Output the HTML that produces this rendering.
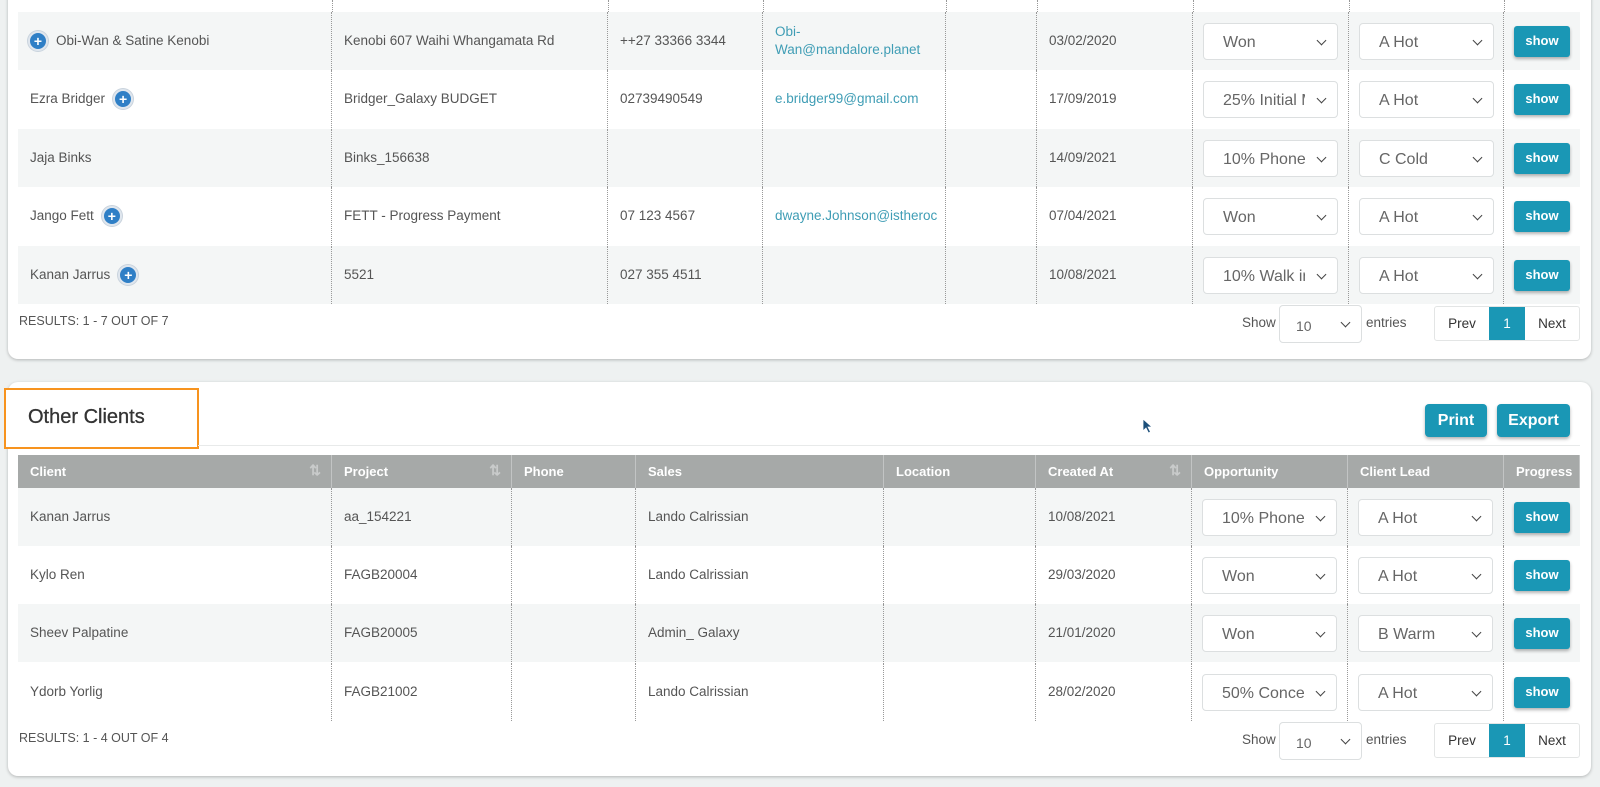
<!DOCTYPE html>
<html><head><meta charset="utf-8"><style>
*{box-sizing:border-box;margin:0;padding:0}
body{width:1600px;height:787px;background:#eef1f1;font-family:"Liberation Sans",sans-serif;color:#555;font-size:13.5px;position:relative;overflow:hidden}
.card{position:absolute;left:8px;width:1583px;background:#fff;border-radius:0 0 10px 10px;box-shadow:0 1px 3px rgba(0,0,0,.25)}
.row{position:absolute;left:18px;width:1562px;height:58px;display:flex}
.row.odd{background:#f4f6f6}
.c{height:100%;display:flex;align-items:center;padding-left:12px;border-right:1px dotted #999;position:relative;line-height:18px}
.c:last-child{border-right:none}
.sel{width:135px;height:37px;border:1px solid #dcdfe0;border-radius:4px;background:#fff;font-size:16px;color:#666;display:flex;align-items:center;padding-left:19px;padding-top:3px;position:relative;overflow:hidden;white-space:nowrap}
.sel span{display:block;width:82px;overflow:hidden}
.sel:after{content:"";position:absolute;right:12px;top:13px;width:6px;height:6px;border-right:1.7px solid #444;border-bottom:1.7px solid #444;transform:rotate(45deg)}
.show{width:56px;height:31px;background:#1a97b5;color:#fff;font-weight:bold;font-size:13px;border-radius:3px;display:flex;align-items:center;justify-content:center;box-shadow:0 2px 3px rgba(0,0,0,.3);margin-left:-1px}
.plus{width:20px;height:20px;border-radius:50%;background:#2f7fc6;border:2px solid #dfe6ee;box-shadow:0 0 0 1px #c9d3dd;color:#fff;font-size:14px;font-weight:bold;display:inline-flex;align-items:center;justify-content:center;line-height:1}
a{color:#3f9db5;text-decoration:none}
.hdr{position:absolute;left:18px;width:1562px;height:33px;background:#a6a9a8;display:flex}
.hdr .c{color:#fff;font-weight:bold;font-size:13px;border-right:1px solid #c2c4c4}
.sort{position:absolute;right:10px;top:6px;color:#c9cbcb;font-size:14px;font-weight:bold}
.res{position:absolute;left:19px;font-size:12.5px;color:#555}
.pg{position:absolute;display:flex;height:35px;border:1px solid #e3e5e5;border-radius:3px;font-size:13.5px;color:#333}
.pg div{display:flex;align-items:center;justify-content:center}
.btn{position:absolute;height:33px;background:#1a97b5;color:#fff;font-weight:bold;font-size:16px;border-radius:4px;display:flex;align-items:center;justify-content:center;box-shadow:0 2px 3px rgba(0,0,0,.3)}
</style></head><body>

<div class="card" style="top:-10px;height:369px;"></div>
<div style="position:absolute;left:332px;top:0;height:12px;border-left:1px dotted #999"></div>
<div style="position:absolute;left:608px;top:0;height:12px;border-left:1px dotted #999"></div>
<div style="position:absolute;left:763px;top:0;height:12px;border-left:1px dotted #999"></div>
<div style="position:absolute;left:946px;top:0;height:12px;border-left:1px dotted #999"></div>
<div style="position:absolute;left:1037px;top:0;height:12px;border-left:1px dotted #999"></div>
<div style="position:absolute;left:1193px;top:0;height:12px;border-left:1px dotted #999"></div>
<div style="position:absolute;left:1349px;top:0;height:12px;border-left:1px dotted #999"></div>
<div style="position:absolute;left:1504px;top:0;height:12px;border-left:1px dotted #999"></div>

<div class="row odd" style="top:12px">
<div class="c" style="width:314px;padding-left:10px"><span class="plus">+</span><span style="margin-left:8px">Obi-Wan &amp; Satine Kenobi</span></div>
<div class="c" style="width:276px">Kenobi 607 Waihi Whangamata Rd</div>
<div class="c" style="width:155px">++27 33366 3344</div>
<div class="c" style="width:183px"><a>Obi-<br>Wan@mandalore.planet</a></div>
<div class="c" style="width:91px"></div>
<div class="c" style="width:156px">03/02/2020</div>
<div class="c" style="width:156px;padding-left:10px"><div class="sel"><span>Won</span></div></div>
<div class="c" style="width:155px;padding-left:10px"><div class="sel"><span>A Hot</span></div></div>
<div class="c" style="width:76px;padding-left:11px"><div class="show">show</div></div>
</div>
<div class="row" style="top:70px">
<div class="c" style="width:314px">Ezra Bridger<span class="plus" style="margin-left:8px">+</span></div>
<div class="c" style="width:276px">Bridger_Galaxy BUDGET</div>
<div class="c" style="width:155px">02739490549</div>
<div class="c" style="width:183px"><a>e.bridger99@gmail.com</a></div>
<div class="c" style="width:91px"></div>
<div class="c" style="width:156px">17/09/2019</div>
<div class="c" style="width:156px;padding-left:10px"><div class="sel"><span>25% Initial M</span></div></div>
<div class="c" style="width:155px;padding-left:10px"><div class="sel"><span>A Hot</span></div></div>
<div class="c" style="width:76px;padding-left:11px"><div class="show">show</div></div>
</div>
<div class="row odd" style="top:129px">
<div class="c" style="width:314px">Jaja Binks</div>
<div class="c" style="width:276px">Binks_156638</div>
<div class="c" style="width:155px"></div>
<div class="c" style="width:183px"></div>
<div class="c" style="width:91px"></div>
<div class="c" style="width:156px">14/09/2021</div>
<div class="c" style="width:156px;padding-left:10px"><div class="sel"><span>10% Phone</span></div></div>
<div class="c" style="width:155px;padding-left:10px"><div class="sel"><span>C Cold</span></div></div>
<div class="c" style="width:76px;padding-left:11px"><div class="show">show</div></div>
</div>
<div class="row" style="top:187px">
<div class="c" style="width:314px">Jango Fett<span class="plus" style="margin-left:8px">+</span></div>
<div class="c" style="width:276px">FETT - Progress Payment</div>
<div class="c" style="width:155px">07 123 4567</div>
<div class="c" style="width:183px;overflow:hidden;white-space:nowrap"><a>dwayne.Johnson@istheroc</a></div>
<div class="c" style="width:91px"></div>
<div class="c" style="width:156px">07/04/2021</div>
<div class="c" style="width:156px;padding-left:10px"><div class="sel"><span>Won</span></div></div>
<div class="c" style="width:155px;padding-left:10px"><div class="sel"><span>A Hot</span></div></div>
<div class="c" style="width:76px;padding-left:11px"><div class="show">show</div></div>
</div>
<div class="row odd" style="top:246px">
<div class="c" style="width:314px">Kanan Jarrus<span class="plus" style="margin-left:8px">+</span></div>
<div class="c" style="width:276px">5521</div>
<div class="c" style="width:155px">027 355 4511</div>
<div class="c" style="width:183px"></div>
<div class="c" style="width:91px"></div>
<div class="c" style="width:156px">10/08/2021</div>
<div class="c" style="width:156px;padding-left:10px"><div class="sel"><span>10% Walk in</span></div></div>
<div class="c" style="width:155px;padding-left:10px"><div class="sel"><span>A Hot</span></div></div>
<div class="c" style="width:76px;padding-left:11px"><div class="show">show</div></div>
</div>
<div class="res" style="top:314px">RESULTS: 1 - 7 OUT OF 7</div>
<div style="position:absolute;left:1242px;top:315px;font-size:13.5px">Show</div>
<div class="sel" style="position:absolute;left:1279px;top:305px;width:83px;height:38px;font-size:14px;padding-left:16px"><span>10</span></div>
<div style="position:absolute;left:1366px;top:315px;font-size:13.5px">entries</div>
<div class="pg" style="left:1434px;top:306px;width:146px"><div style="width:54px">Prev</div><div style="width:36px;background:#1a97b5;color:#fff">1</div><div style="width:54px">Next</div></div>

<div class="card" style="top:382px;height:394px;border-radius:10px"></div>
<div style="position:absolute;left:4px;top:388px;width:195px;height:61px;border:2px solid #f7931e;background:#fff"></div>
<div style="position:absolute;left:28px;top:406px;font-size:20px;color:#333;-webkit-text-stroke:0.3px #333">Other Clients</div>
<div style="position:absolute;left:198px;top:445px;width:1382px;border-top:1px solid #e8eaea"></div>
<div class="btn" style="left:1425px;top:404px;width:62px">Print</div>
<div class="btn" style="left:1497px;top:404px;width:73px">Export</div>

<div class="hdr" style="top:455px">
<div class="c" style="width:314px">Client<span class="sort">⇅</span></div>
<div class="c" style="width:180px">Project<span class="sort">⇅</span></div>
<div class="c" style="width:124px">Phone</div>
<div class="c" style="width:248px">Sales</div>
<div class="c" style="width:152px">Location</div>
<div class="c" style="width:156px">Created At<span class="sort">⇅</span></div>
<div class="c" style="width:156px">Opportunity</div>
<div class="c" style="width:156px">Client Lead</div>
<div class="c" style="width:76px">Progress</div>
</div>

<div class="row odd" style="top:488px">
<div class="c" style="width:314px">Kanan Jarrus</div><div class="c" style="width:180px">aa_154221</div><div class="c" style="width:124px"></div><div class="c" style="width:248px">Lando Calrissian</div><div class="c" style="width:152px"></div><div class="c" style="width:156px">10/08/2021</div>
<div class="c" style="width:156px;padding-left:10px"><div class="sel"><span>10% Phone</span></div></div>
<div class="c" style="width:156px;padding-left:10px"><div class="sel"><span>A Hot</span></div></div>
<div class="c" style="width:76px;padding-left:11px"><div class="show">show</div></div>
</div>
<div class="row" style="top:546px">
<div class="c" style="width:314px">Kylo Ren</div><div class="c" style="width:180px">FAGB20004</div><div class="c" style="width:124px"></div><div class="c" style="width:248px">Lando Calrissian</div><div class="c" style="width:152px"></div><div class="c" style="width:156px">29/03/2020</div>
<div class="c" style="width:156px;padding-left:10px"><div class="sel"><span>Won</span></div></div>
<div class="c" style="width:156px;padding-left:10px"><div class="sel"><span>A Hot</span></div></div>
<div class="c" style="width:76px;padding-left:11px"><div class="show">show</div></div>
</div>
<div class="row odd" style="top:604px">
<div class="c" style="width:314px">Sheev Palpatine</div><div class="c" style="width:180px">FAGB20005</div><div class="c" style="width:124px"></div><div class="c" style="width:248px">Admin_ Galaxy</div><div class="c" style="width:152px"></div><div class="c" style="width:156px">21/01/2020</div>
<div class="c" style="width:156px;padding-left:10px"><div class="sel"><span>Won</span></div></div>
<div class="c" style="width:156px;padding-left:10px"><div class="sel"><span>B Warm</span></div></div>
<div class="c" style="width:76px;padding-left:11px"><div class="show">show</div></div>
</div>
<div class="row" style="top:663px">
<div class="c" style="width:314px">Ydorb Yorlig</div><div class="c" style="width:180px">FAGB21002</div><div class="c" style="width:124px"></div><div class="c" style="width:248px">Lando Calrissian</div><div class="c" style="width:152px"></div><div class="c" style="width:156px">28/02/2020</div>
<div class="c" style="width:156px;padding-left:10px"><div class="sel"><span>50% Concep</span></div></div>
<div class="c" style="width:156px;padding-left:10px"><div class="sel"><span>A Hot</span></div></div>
<div class="c" style="width:76px;padding-left:11px"><div class="show">show</div></div>
</div>
<div class="res" style="top:731px">RESULTS: 1 - 4 OUT OF 4</div>
<div style="position:absolute;left:1242px;top:732px;font-size:13.5px">Show</div>
<div class="sel" style="position:absolute;left:1279px;top:722px;width:83px;height:38px;font-size:14px;padding-left:16px"><span>10</span></div>
<div style="position:absolute;left:1366px;top:732px;font-size:13.5px">entries</div>
<div class="pg" style="left:1434px;top:723px;width:146px"><div style="width:54px">Prev</div><div style="width:36px;background:#1a97b5;color:#fff">1</div><div style="width:54px">Next</div></div>

<svg style="position:absolute;left:1142px;top:418px" width="12" height="16" viewBox="0 0 12 16"><path d="M1 1 L1 13 L4 10 L6.5 15 L8.5 14 L6 9 L10 9 Z" fill="#1c4f7a" stroke="#fff" stroke-width="0.8"/></svg>
</body></html>
